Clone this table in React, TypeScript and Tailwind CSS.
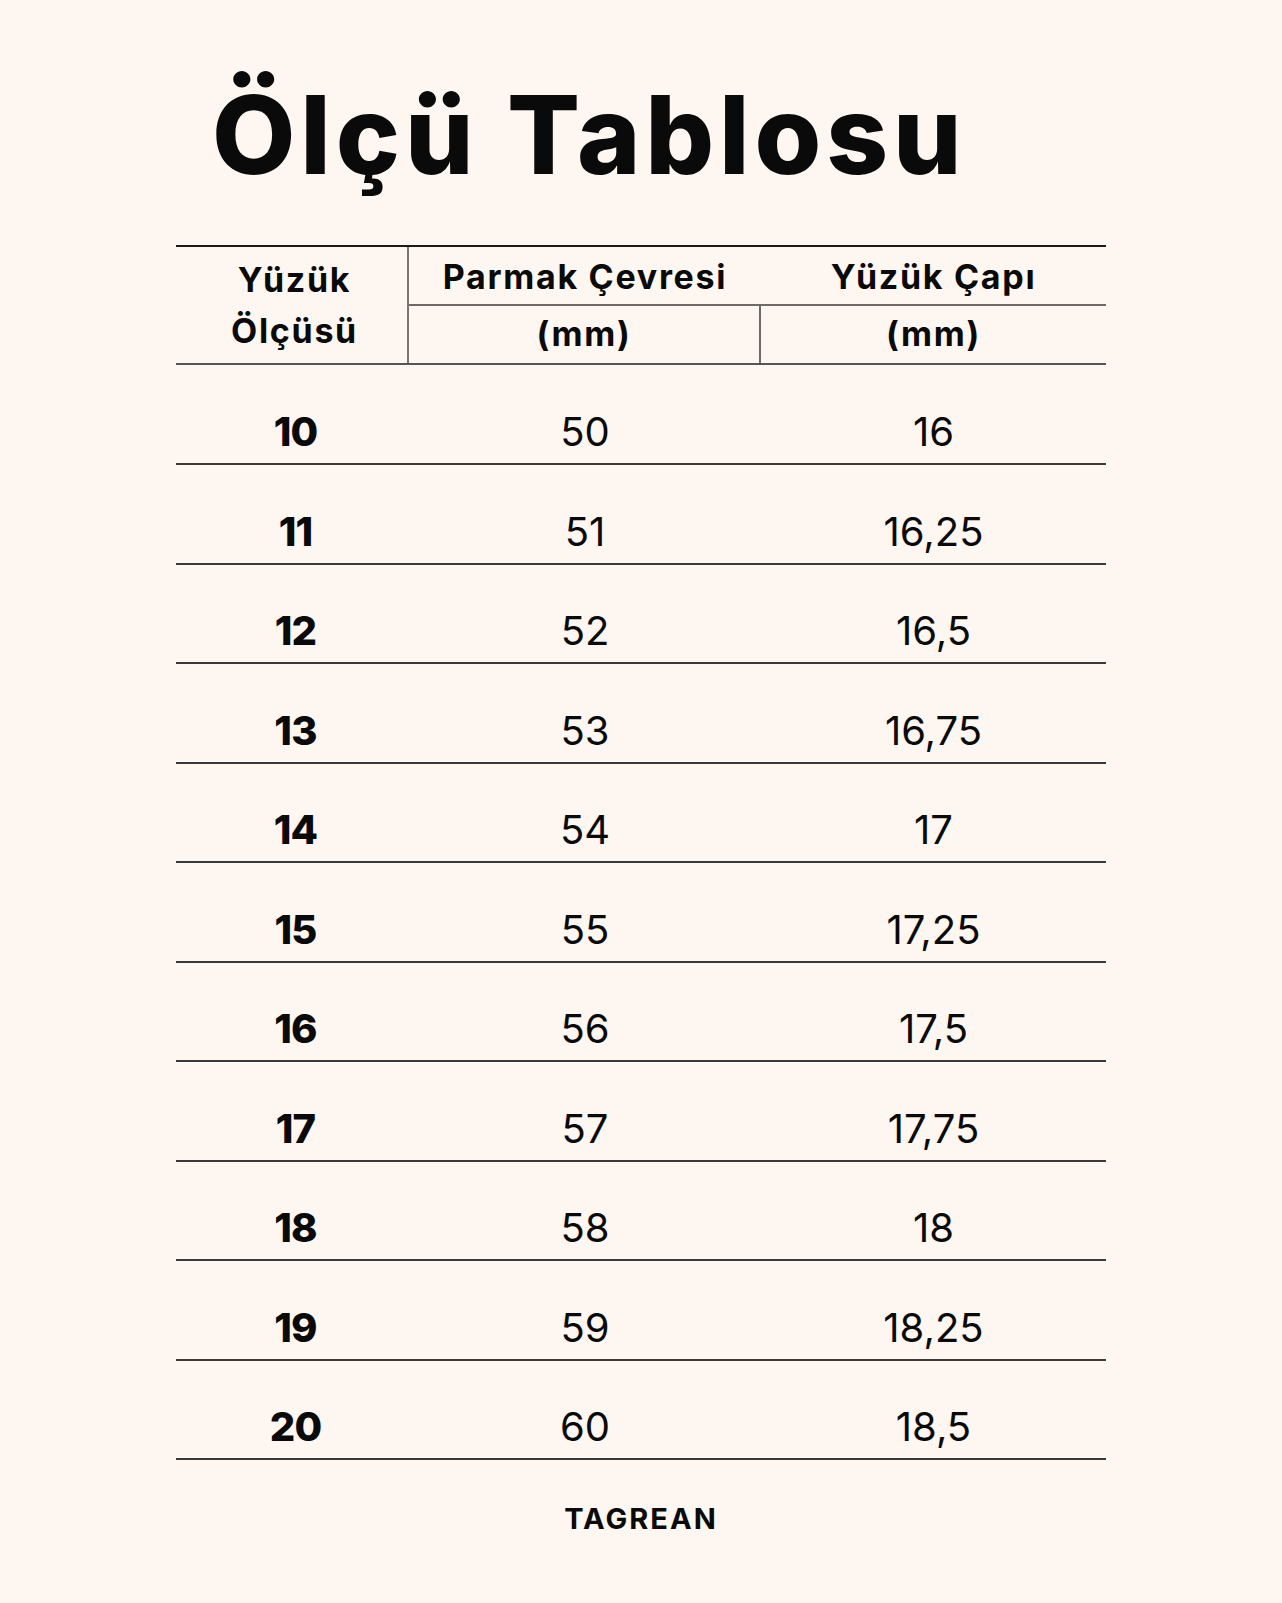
import React from "react";

const rows: [string, string, string][] = [
  ["10", "50", "16"],
  ["11", "51", "16,25"],
  ["12", "52", "16,5"],
  ["13", "53", "16,75"],
  ["14", "54", "17"],
  ["15", "55", "17,25"],
  ["16", "56", "17,5"],
  ["17", "57", "17,75"],
  ["18", "58", "18"],
  ["19", "59", "18,25"],
  ["20", "60", "18,5"],
];

export default function App() {
  return (
    <div
      className="w-[1282px] h-[1603px] bg-[#fef6f0] text-[#0a0a0a]"
      style={{ fontFamily: "Inter, 'Noto Sans', sans-serif" }}
    >
      <div className="pt-[81px] pl-[212px]">
        <h1 className="text-[108px] leading-none font-extrabold tracking-[0.045em]">Ölçü Tablosu</h1>
      </div>

      <div className="ml-[176px] w-[930px] mt-[56px]">
        {/* header */}
        <div className="grid grid-cols-[233px_352px_345px] border-t-2 border-[#1a1a1a] border-b-2 border-b-[#555]">
          <div className="row-span-2 border-r-2 border-[#7a766f] flex flex-col items-center pl-[6px] pt-[7px] text-[34px] font-bold leading-[51px] tracking-[0.05em]">
            <span>Yüzük</span>
            <span>Ölçüsü</span>
          </div>
          <div className="col-span-2 h-[59px] border-b-2 border-[#6e6a66] grid grid-cols-[352px_345px] text-[34px] font-bold tracking-[0.05em]">
            <div className="flex items-end justify-center pb-[10px] leading-none">Parmak Çevresi</div>
            <div className="flex items-end justify-center pb-[10px] leading-none">Yüzük Çapı</div>
          </div>
          <div className="h-[57px] border-r-2 border-[#6e6a66] flex items-end justify-center pb-[12px] text-[34px] font-bold leading-none tracking-[0.05em]">
            (mm)
          </div>
          <div className="h-[57px] flex items-end justify-center pb-[12px] text-[34px] font-bold leading-none tracking-[0.05em]">
            (mm)
          </div>
        </div>

        {/* body */}
        {rows.map((r, i) => (
          <div
            key={r[0]}
            className={`grid grid-cols-[233px_352px_345px] border-b-2 border-[#3a3a3a] text-[40px] leading-none ${
              i === 0 ? "h-[100px]" : "h-[99.5px]"
            }`}
          >
            <div className="flex items-end justify-center pl-[6px] pb-[11px] font-extrabold tracking-[-0.02em]">{r[0]}</div>
            <div className="flex items-end justify-center pb-[11px] font-normal">{r[1]}</div>
            <div className="flex items-end justify-center pb-[11px] font-normal">{r[2]}</div>
          </div>
        ))}
      </div>

      <div className="flex justify-center pt-[44px]">
        <span className="text-[29px] leading-none font-bold tracking-[0.07em]">TAGREAN</span>
      </div>
    </div>
  );
}
